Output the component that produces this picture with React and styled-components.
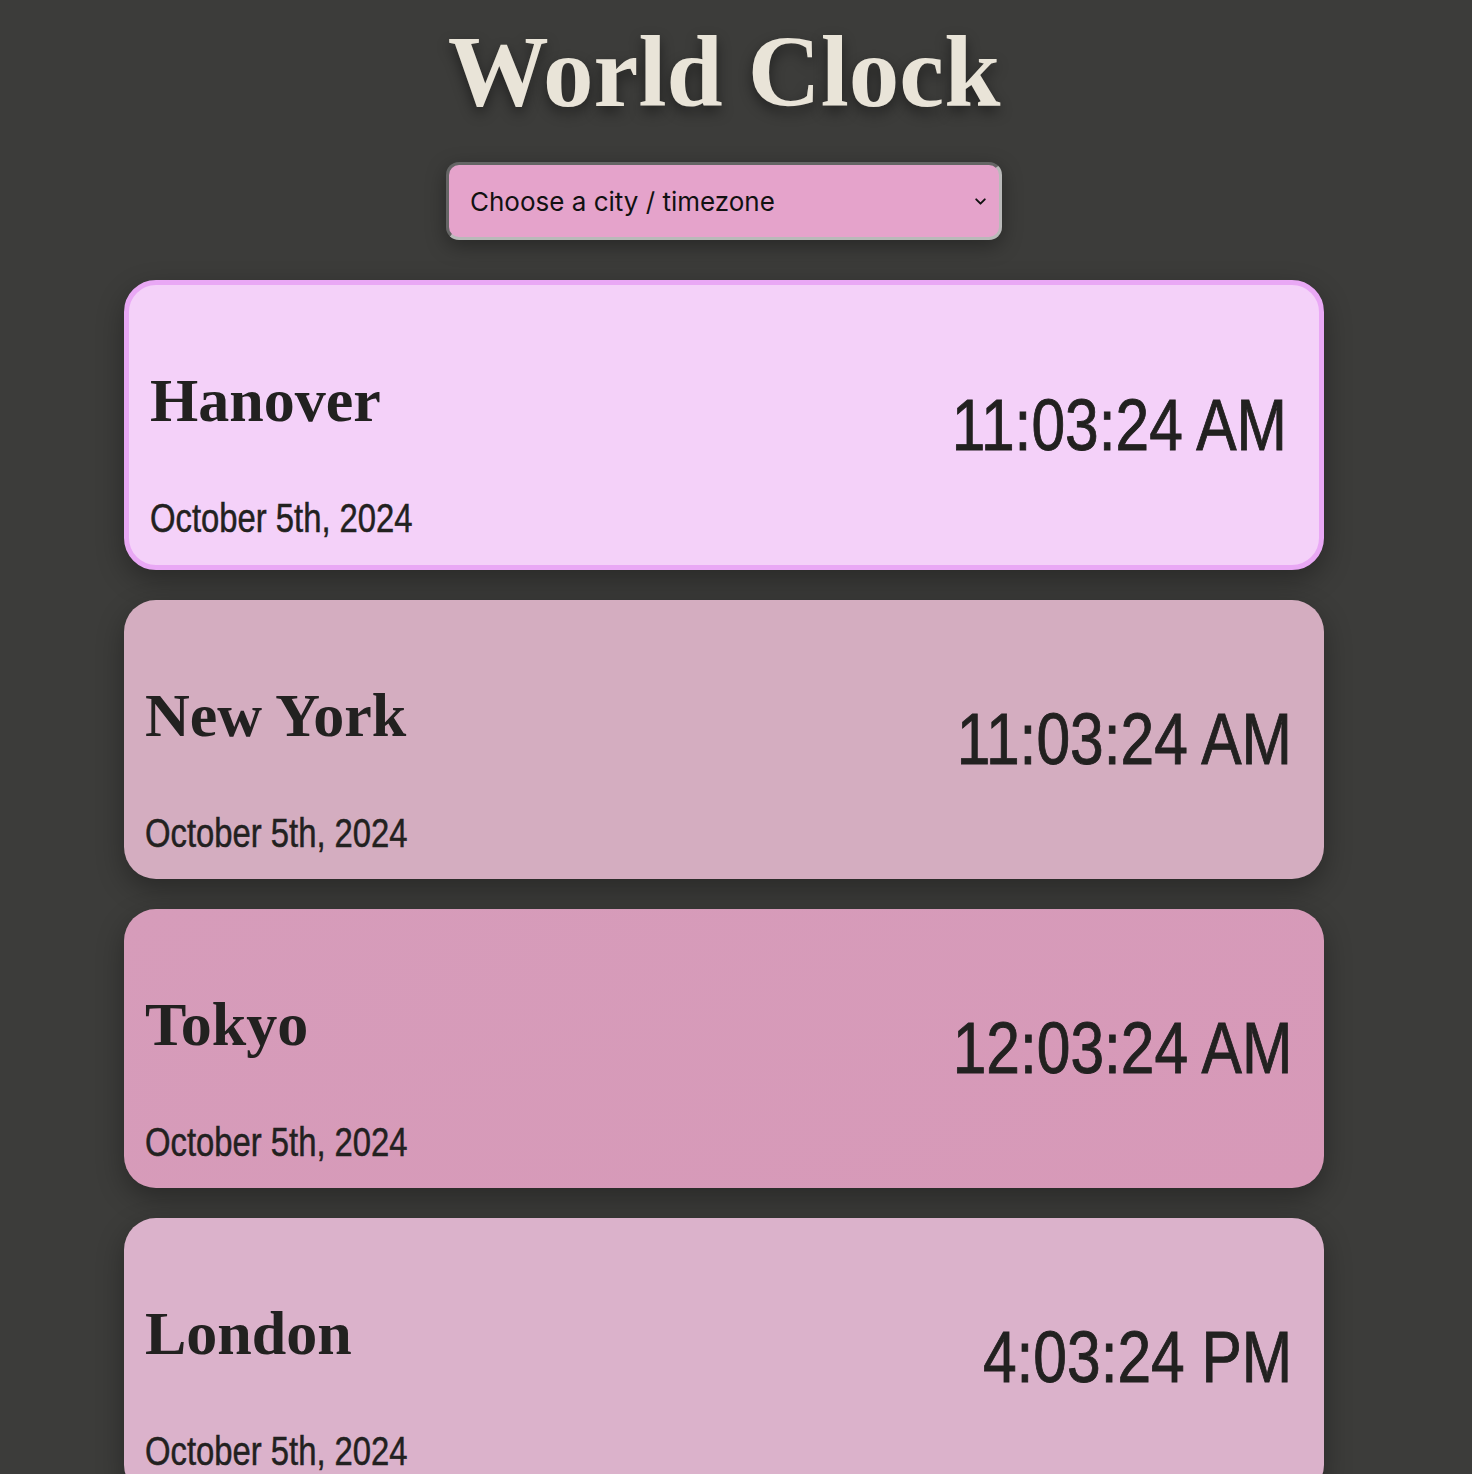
import styled, { createGlobalStyle } from 'styled-components';

const GlobalStyle = createGlobalStyle`
  html, body {
    margin: 0;
    padding: 0;
    background: #3c3c3a;
  }
  * {
    box-sizing: border-box;
  }
`;

const Page = styled.main`
  min-height: 1474px;
  padding: 15px 24px 40px 0;
  display: flex;
  flex-direction: column;
  align-items: center;
`;

const Title = styled.h1`
  margin: 0;
  font-family: "Liberation Serif", "Times New Roman", serif;
  font-weight: 700;
  font-size: 101px;
  line-height: 115px;
  color: #e9e4d8;
  text-shadow: 0 6px 14px rgba(0, 0, 0, 0.45);
`;

const SelectWrap = styled.div`
  position: relative;
  margin-top: 32px;
  width: 556px;
  border-radius: 13px;
  box-shadow: 0 6px 20px rgba(0, 0, 0, 0.35);
`;

const Select = styled.select`
  appearance: none;
  width: 100%;
  height: 78px;
  padding: 0 40px 0 21px;
  border: 3px inset #b9b9b9;
  border-radius: 13px;
  background: #e5a3cb;
  color: #111;
  font-family: Inter, "Noto Sans", sans-serif;
  font-size: 26px;
  outline: none;
`;

const Chevron = styled.svg`
  position: absolute;
  right: 14px;
  top: 50%;
  width: 15px;
  height: 15px;
  margin-top: -7px;
  pointer-events: none;
`;

const List = styled.section`
  margin-top: 40px;
  width: 1200px;
  display: flex;
  flex-direction: column;
  gap: 30px;
`;

const Card = styled.article`
  display: flex;
  justify-content: space-between;
  align-items: center;
  padding: 0 32px 0 21px;
  border: ${(p) => (p.$active ? '5px solid #e9a8f5' : 'none')};
  border-radius: 32px;
  background: ${(p) => p.$bg};
  box-shadow: 0 10px 28px rgba(0, 0, 0, 0.32);
  color: #222120;
`;

const Info = styled.div`
  display: flex;
  flex-direction: column;
  gap: 59px;
  padding: ${(p) => (p.$active ? '79px 0 24px' : '79px 0 23px')};
`;

const City = styled.h2`
  margin: 0;
  font-family: "Liberation Serif", "Times New Roman", serif;
  font-weight: 700;
  font-size: 62px;
  line-height: 72px;
`;

const Narrow = styled.div`
  font-family: "Liberation Sans", Arial, sans-serif;
  line-height: 1.15;
  white-space: nowrap;
  -webkit-text-stroke: 0.5px #222120;
`;

const DateText = styled(Narrow)`
  font-size: 40px;
  transform: scaleX(0.82);
  transform-origin: left center;
`;

const Time = styled(Narrow)`
  font-size: 72px;
  transform: scaleX(0.84);
  transform-origin: right center;
  -webkit-text-stroke: 0.9px #222120;
`;

const clocks = [
  { city: 'Hanover', time: '11:03:24 AM', bg: '#f4d1f9', active: true },
  { city: 'New York', time: '11:03:24 AM', bg: '#d4adc0' },
  { city: 'Tokyo', time: '12:03:24 AM', bg: 'linear-gradient(160deg, #d69cba, #d799b8)' },
  { city: 'London', time: '4:03:24 PM', bg: '#dbb2cb' },
];

export default function App() {
  return (
    <>
      <GlobalStyle />
      <Page>
        <Title>World Clock</Title>
        <SelectWrap>
          <Select defaultValue="">
            <option value="">Choose a city / timezone</option>
            <option value="current">My current location</option>
            <option value="Europe/London">London</option>
            <option value="America/New_York">New York</option>
            <option value="Asia/Tokyo">Tokyo</option>
          </Select>
          <Chevron viewBox="0 0 14 14" fill="none">
            <path d="M3 5l4 4 4-4" stroke="#111" strokeWidth="1.8" strokeLinecap="round" strokeLinejoin="round" />
          </Chevron>
        </SelectWrap>
        <List>
          {clocks.map((c) => (
            <Card key={c.city} $bg={c.bg} $active={c.active}>
              <Info $active={c.active}>
                <City>{c.city}</City>
                <DateText>October 5th, 2024</DateText>
              </Info>
              <Time>{c.time}</Time>
            </Card>
          ))}
        </List>
      </Page>
    </>
  );
}
